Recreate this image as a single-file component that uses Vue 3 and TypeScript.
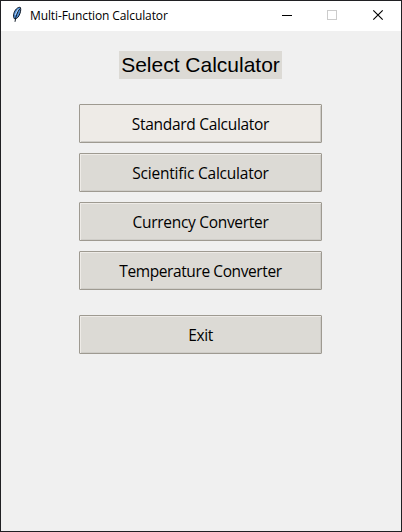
<script setup lang="ts">
interface MenuItem {
  key: string
  label: string
}

const calculators: MenuItem[] = [
  { key: 'standard', label: 'Standard Calculator' },
  { key: 'scientific', label: 'Scientific Calculator' },
  { key: 'currency', label: 'Currency Converter' },
  { key: 'temperature', label: 'Temperature Converter' },
]
</script>

<template>
  <div class="window">
    <header class="titlebar">
      <svg class="feather" width="16" height="18" viewBox="0 0 16 18">
        <path d="M5.2 12.6 C3.7 9.5 5 5.5 7.3 3 C8.8 1.4 10.8 .9 11.5 1.6 C12.2 4 11.3 7.4 9.8 10 C8.6 12 7 13.2 5.2 12.6Z" fill="#4f8fd8" stroke="#101722" stroke-width="1" />
        <path d="M9.6 3.2 L6.2 9" stroke="#b5d5f6" stroke-width="1.3" />
        <path d="M10.6 3 C8.5 6 6.7 10 6 15.8" fill="none" stroke="#101a26" stroke-width="1" />
      </svg>
      <span class="title">Multi-Function Calculator</span>
      <div class="controls">
        <svg width="45" height="30" viewBox="0 0 45 30" shape-rendering="crispEdges">
          <path d="M17 14.5h10" stroke="#000" fill="none" />
        </svg>
        <svg width="46" height="30" viewBox="0 0 46 30" shape-rendering="crispEdges">
          <path d="M17.5 9.5h9v9h-9z" stroke="#ccc" fill="none" />
        </svg>
        <svg width="46" height="30" viewBox="0 0 46 30">
          <path d="M17.3 9.3l9.4 9.4M26.7 9.3l-9.4 9.4" stroke="#000" stroke-width="1.15" fill="none" />
        </svg>
      </div>
    </header>
    <main class="content">
      <h1 class="heading">Select Calculator</h1>
      <nav class="menu">
        <button v-for="item in calculators" :key="item.key" class="item" :class="item.key" type="button">
          <span>{{ item.label }}</span>
        </button>
        <button class="item exit" type="button"><span>Exit</span></button>
      </nav>
    </main>
  </div>
</template>

<style>
body {
  margin: 0;
}
</style>

<style scoped>
.window {
  box-sizing: border-box;
  width: 402px;
  height: 532px;
  border: 1px solid #202023;
  background: #f0f0f0;
  color: #000;
}
.titlebar {
  display: flex;
  height: 30px;
  background: #fff;
}
.feather {
  flex: none;
  margin: 5px 5px 0 8px;
}
.title {
  font: 12px/30px "Open Sans", "Noto Sans", sans-serif;
  letter-spacing: -0.11px;
  white-space: nowrap;
}
.controls {
  display: flex;
  flex: none;
  margin-right: -1px;
  margin-left: auto;
}
.content {
  display: flex;
  flex-direction: column;
  align-items: center;
  padding: 20px 1px 0 0;
}
.heading {
  box-sizing: border-box;
  width: 163px;
  height: 28px;
  margin: 0 0 25px;
  background: #dcdad5;
  font: 400 21px/28px "Liberation Sans", Arial, sans-serif;
  text-align: center;
  white-space: nowrap;
}
.menu {
  display: flex;
  flex-direction: column;
  gap: 10px;
}
.item {
  box-sizing: border-box;
  width: 243px;
  height: 39px;
  padding: 2px 0 0;
  border: 1px solid #9e9a91;
  border-radius: 1px;
  background: #dcdad5;
  box-shadow: inset 1px 1px #eeebe7, inset -1px -1px #cfcdc8;
  color: #000;
  font: 15.5px/35px "Open Sans", "Noto Sans", sans-serif;
  letter-spacing: -0.3px;
  text-align: center;
  white-space: nowrap;
}
.standard {
  background: #eeebe7;
}
.scientific {
  letter-spacing: -0.22px;
}
.temperature {
  letter-spacing: -0.4px;
}
.exit {
  margin-top: 15px;
  letter-spacing: -0.4px;
}
</style>
